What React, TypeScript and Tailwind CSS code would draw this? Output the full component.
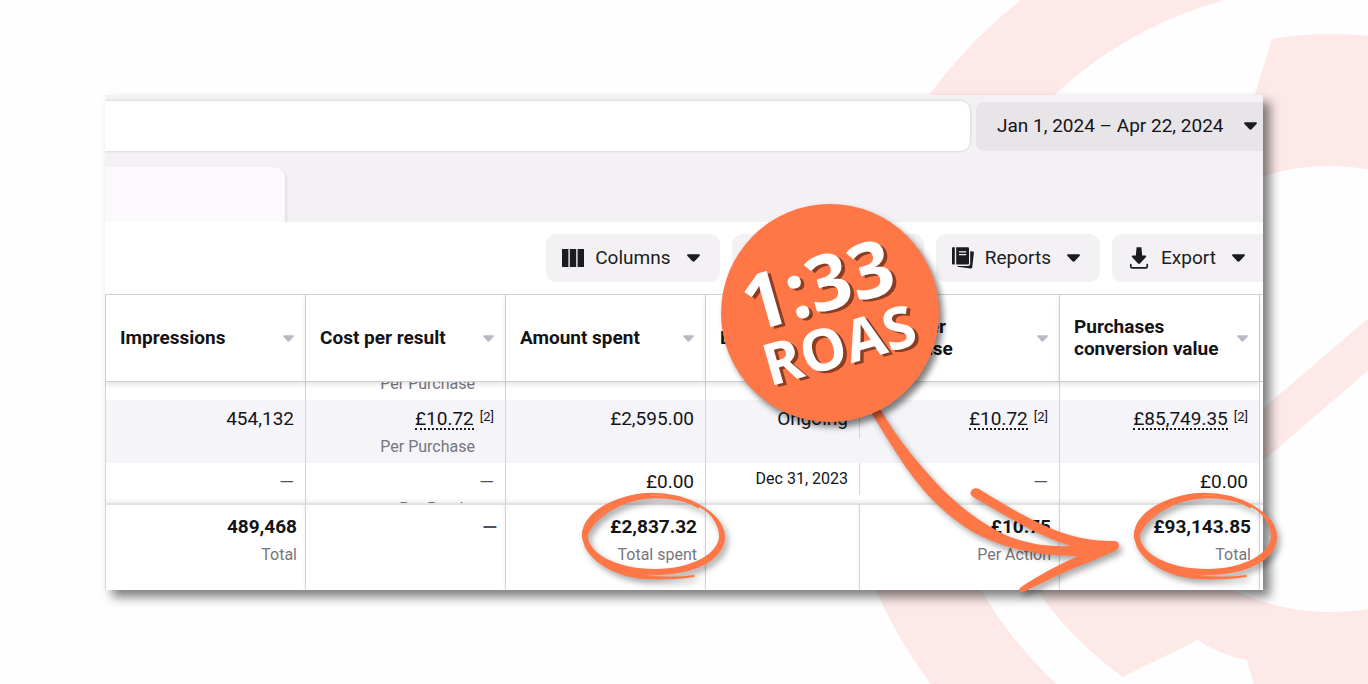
import React from 'react';

const CIRCLED = ['translate(-552 0)', 'translate(0 0)'];

const Caret: React.FC = () => (
  <svg className="w-[13px] h-2 shrink-0" viewBox="0 0 13 8" aria-hidden="true">
    <path d="M1.2 0.3H11.8C12.8 0.3 13.2 1.4 12.5 2.1L7.6 7.2C7 7.8 6 7.8 5.4 7.2L0.5 2.1C-0.2 1.4 0.2 0.3 1.2 0.3Z" fill="#1c1b20" />
  </svg>
);

const SortCaret: React.FC = () => (
  <svg className="w-[11px] h-[7px] shrink-0" viewBox="0 0 11 7" aria-hidden="true">
    <path d="M1 0.3H10C10.8 0.3 11.2 1.2 10.6 1.8L6.5 6.2C5.9 6.8 5.1 6.8 4.5 6.2L0.4 1.8C-0.2 1.2 0.2 0.3 1 0.3Z" fill="#bab9c4" />
  </svg>
);

const ColumnsIcon: React.FC = () => (
  <svg className="w-[22px] h-[22px]" viewBox="0 0 22 22" fill="#1c1b20" aria-hidden="true">
    <path d="M0 2H6.4V20H0ZM7.8 2H14.2V20H7.8ZM15.6 2H22V20H15.6Z" />
  </svg>
);

const ReportsIcon: React.FC = () => (
  <svg className="w-[22px] h-[22px]" viewBox="0 0 22 22" fill="#1c1b20" aria-hidden="true">
    <path d="M1 0.3H2.8V17.6H1.2C0.5 17.6 0 17 0 16.4V1.4C0 0.8 0.4 0.3 1 0.3Z" />
    <path d="M4.2 0.3H15.6C16.5 0.3 17 0.8 17 1.7V16.2C17 17.1 16.5 17.6 15.6 17.6H4.2Z" />
    <path d="M18.2 4.2L21 4.6C21.6 4.7 22 5.2 21.9 5.8L20.2 20.6C20.1 21.3 19.6 21.7 18.9 21.6L5.5 19.7L5.3 18.9H16C17.4 18.9 18.2 18 18.2 16.8Z" />
    <path d="M7 4.8H14.2M7 7.6H14.2" stroke="#f3f2f5" strokeWidth="1.2" />
  </svg>
);

const ExportIcon: React.FC = () => (
  <svg className="w-[22px] h-[22px]" viewBox="0 0 22 22" fill="#1c1b20" aria-hidden="true">
    <path d="M8.6 0.3H13.4L14.2 8.5H17.4C18.2 8.5 18.5 9.3 18 9.9L12 16.4C11.4 17 10.6 17 10 16.4L4 9.9C3.5 9.3 3.8 8.5 4.6 8.5H7.8Z" />
    <path d="M2.8 17.6V19.4C2.8 20.3 3.3 20.8 4.2 20.8H17.8C18.7 20.8 19.2 20.3 19.2 19.4V17.6" fill="none" stroke="#1c1b20" strokeWidth="1.7" strokeLinecap="round" />
  </svg>
);

const BreakdownIcon: React.FC = () => (
  <svg className="w-[22px] h-[22px]" viewBox="0 0 22 22" fill="#1c1b20" aria-hidden="true">
    <path d="M0 3H22V8H0ZM0 10H14V14H0ZM0 16H14V20H0Z" />
  </svg>
);

interface ToolButtonProps {
  label: string;
  icon: React.ReactNode;
  className?: string;
}

const ToolButton: React.FC<ToolButtonProps> = ({ label, icon, className = 'rounded-[10px] pr-5' }) => (
  <button type="button" className={`flex items-center h-12 pl-4 bg-[#f3f1f4] text-[19px] text-[#1c1b20] ${className}`}>
    <span className="mr-[11px]">{icon}</span>
    <span className="mr-4">{label}</span>
    <Caret />
  </button>
);

const HEADERS = [
  { name: 'Impressions' },
  { name: 'Cost per result' },
  { name: 'Amount spent' },
  { name: 'Ends', noSort: true },
  { name: 'Cost per purchase', narrow: true },
  { name: 'Purchases conversion value', narrow: true },
];

const Estimated: React.FC<{ value: string }> = ({ value }) => (
  <div className="flex justify-end">
    <a href="#" className="border-b-2 border-dotted border-[#1c1b20] h-[23px]">{value}</a>
    <sup className="top-0 ml-[6px] text-[13px] leading-5">[2]</sup>
  </div>
);

const Dash: React.FC = () => <span className="text-[#50505f]">—</span>;

interface TotalProps {
  value: string;
  label: string;
}

const Total: React.FC<TotalProps> = ({ value, label }) => (
  <td className="border-l border-[#d4d3d8] pr-2">
    <div className="font-bold">{value}</div>
    <div className="mt-1 text-base leading-6 text-[#77767b]">{label}</div>
  </td>
);

const Backdrop: React.FC = () => (
  <svg className="absolute inset-0 w-full h-full" viewBox="0 0 1368 684" preserveAspectRatio="xMaxYMid slice" aria-hidden="true">
    <circle cx="1330" cy="388" r="449" fill="none" stroke="#fde9e7" strokeWidth="94" />
    <g fill="#fde9e7">
      <path d="M1272 39A354 354 0 0 1 1368 36V169A222 222 0 0 0 1240 185L1235 160Z" />
      <path d="M1200 462L1368 318V370L1200 515Z" />
      <path d="M1030 578A354 354 0 0 0 1123 676L1198 639C1214 649 1230 656 1247 659L1254 684H1368V608A222 222 0 0 1 1200 569Z" />
    </g>
  </svg>
);

const Annotations: React.FC = () => (
  <svg className="absolute inset-0 z-20 w-full h-full overflow-visible pointer-events-none drop-shadow-[3px_4px_3px_rgba(0,0,0,0.35)]" viewBox="105 95 1158 495" aria-hidden="true">
    <path
      fill="#ff7747"
      d="M869 409C885 435 897 455 910 473C930 500 950 518 973 532C1000 547 1035 556 1078 556C1058 565 1035 577 1020 588C1018 590 1020 593 1023 592C1045 582 1065 571 1087 563L1115 551C1121 548 1120 540 1113 541C1092 541 1078 538 1060 532C1033 522 1005 505 979 489C973 486 967 493 973 497C1000 512 1035 535 1071 546C1048 547 1030 544 1010 537C985 526 965 511 943 490C920 466 897 438 880 409Z"
    />
    {CIRCLED.map((transform) => (
      <g key={transform} transform={transform} fill="none" stroke="#ff7747" strokeLinecap="round" strokeLinejoin="round">
        <path
          strokeWidth="2.4"
          d="M1250 507C1240 500 1222 497 1207 497C1185 497 1162 507 1149 520C1136 533 1134 543 1146 555C1160 567 1182 571 1207 572C1245 571 1275 556 1275 536C1275 523 1264 513 1252 506C1238 498 1220 494 1203 494C1170 495 1137 513 1135 535C1136 552 1157 569 1180 575"
        />
        <path
          fill="#ff7747"
          stroke="none"
          fillRule="evenodd"
          d="M1203 493C1164 495 1134 513 1134 536C1136 553 1160 575 1207 575C1250 575 1277 558 1277 537C1277 524 1266 513 1251 505C1264 515 1271 525 1271 536C1271 553 1244 569 1207 569C1168 569 1140 553 1140 536C1141 518 1168 499 1203 498Z"
        />
        <path
          fill="#ff7747"
          stroke="none"
          d="M1136 545C1144 564 1170 577 1197 579C1216 580 1234 579 1246 577C1248 576 1247 575 1245 575C1224 578 1198 577 1178 570C1162 565 1148 557 1140 545Z"
        />
      </g>
    ))}
  </svg>
);

const App: React.FC = () => {
  return (
    <main className="relative min-h-screen overflow-hidden bg-[#fefefe] px-[105px] py-[95px] font-[Roboto,sans-serif] text-[#141318]">
      <Backdrop />

      <div className="relative shadow-[7px_7px_10px_rgba(0,0,0,0.5)]">
        <section className="overflow-hidden bg-white">
          {/* Search and date range */}
          <div className="bg-[#f3f1f4] pt-[6px]">
            <div className="flex items-center gap-[6px]">
              <input
                type="text"
                aria-label="Search"
                className="min-w-0 flex-1 h-[50px] rounded-r-[10px] bg-white shadow-[0_0_3px_rgba(0,0,0,0.2)] outline-none"
              />
              <button type="button" className="flex items-center shrink-0 w-[287px] h-[49px] pl-[21px] rounded-l-lg bg-[#e8e5e8] text-[19px]">
                <span className="mr-5 whitespace-nowrap">Jan 1, 2024 – Apr 22, 2024</span>
                <Caret />
              </button>
            </div>
            <div className="mt-4 w-[180px] h-[55px] rounded-tr-xl bg-[#fbf9fc] shadow-[2px_2px_3px_rgba(0,0,0,0.08)]"></div>
          </div>

          {/* Toolbar */}
          <div className="relative flex justify-end gap-3 bg-white py-3">
            <ToolButton label="Columns" icon={<ColumnsIcon />} />
            <ToolButton label="Breakdown" icon={<BreakdownIcon />} />
            <ToolButton label="Reports" icon={<ReportsIcon />} />
            <ToolButton label="Export" icon={<ExportIcon />} className="w-[151px] rounded-l-[10px]" />
          </div>

          <table className="w-full table-fixed border-separate border-spacing-0 text-right text-[19px] leading-6">
            <colgroup>
              <col className="w-[200px]" />
              <col className="w-[200px]" />
              <col className="w-[200px]" />
              <col className="w-[154px]" />
              <col className="w-[200px]" />
              <col className="w-[200px]" />
              <col className="w-1" />
            </colgroup>
            <thead>
              <tr className="h-[88px]">
                {HEADERS.map((h) => (
                  <th key={h.name} className="relative z-10 border-l border-y border-[#cfced3] bg-white p-0 pl-[14px] pr-[11px] text-left shadow-[0_3px_5px_rgba(0,0,0,0.1)]">
                    <div className="flex items-center justify-between text-[19px] leading-[22px]">
                      <span className={h.narrow ? 'w-[150px]' : ''}>{h.name}</span>
                      {!h.noSort && <SortCaret />}
                    </div>
                  </th>
                ))}
                <th className="border-l border-y border-[#cfced3] p-0"></th>
              </tr>
            </thead>
            <tbody className="align-top">
              <tr className="h-[18px]">
                <td className="border-l border-[#d4d3d8] p-0"></td>
                <td className="border-l border-[#d4d3d8] p-0 pr-[30px]">
                  <div className="flex items-end justify-end h-[18px] overflow-hidden text-base leading-6 text-[#77767b]">
                    <span className="pb-1">Per Purchase</span>
                  </div>
                </td>
                <td className="border-l border-[#d4d3d8] p-0"></td>
                <td className="border-l border-[#d4d3d8] p-0"></td>
                <td className="border-l border-[#e4e3e8] p-0"></td>
                <td className="border-l border-[#d4d3d8] p-0"></td>
                <td className="border-l border-[#d4d3d8] p-0"></td>
              </tr>
              <tr className="h-[63px] bg-[#f5f4f9]">
                <td className="border-l border-[#d4d3d8] p-0 pt-[7px] pr-[11px]">454,132</td>
                <td className="border-l border-[#d4d3d8] p-0 pt-[7px] pr-[11px]">
                  <Estimated value="£10.72" />
                  <div className="mt-[5px] pr-[19px] text-base leading-6 text-[#77767b]">Per Purchase</div>
                </td>
                <td className="border-l border-[#d4d3d8] p-0 pt-[7px] pr-[11px]">£2,595.00</td>
                <td className="border-l border-[#d4d3d8] p-0">
                  <div className="h-[38px] -mr-px border-r border-[#d4d3d8] pt-[7px] pr-[11px]">Ongoing</div>
                </td>
                <td className="p-0 pt-[7px] pr-[11px]">
                  <Estimated value="£10.72" />
                </td>
                <td className="border-l border-[#d4d3d8] p-0 pt-[7px] pr-[11px]">
                  <Estimated value="£85,749.35" />
                </td>
                <td className="border-l border-[#d4d3d8] bg-white p-0"></td>
              </tr>
              <tr className="h-10">
                <td className="border-l border-[#d4d3d8] p-0 pt-[7px] pr-[11px]"><Dash /></td>
                <td className="border-l border-[#d4d3d8] p-0 pr-[11px]">
                  <div className="h-10 overflow-hidden pt-[7px]">
                    <Dash />
                    <div className="mt-[3px] text-base leading-6 text-[#77767b]">Per Purchase</div>
                  </div>
                </td>
                <td className="border-l border-[#d4d3d8] p-0 pt-[7px] pr-[11px]">£0.00</td>
                <td className="border-l border-[#d4d3d8] p-0">
                  <div className="h-8 -mr-px border-r border-[#d4d3d8] pt-1 pr-[11px] text-base leading-6">Dec 31, 2023</div>
                </td>
                <td className="p-0 pt-[7px] pr-[11px]"><Dash /></td>
                <td className="border-l border-[#d4d3d8] p-0 pt-[7px] pr-[11px]">£0.00</td>
                <td className="border-l border-[#d4d3d8] p-0"></td>
              </tr>
            </tbody>
            <tfoot className="align-top [&_td]:relative [&_td]:h-[87px] [&_td]:border-t-2 [&_td]:border-t-[#e2e1e5] [&_td]:bg-white [&_td]:pt-[10px] [&_td]:shadow-[0_-2px_4px_rgba(0,0,0,0.08)]">
              <tr>
                <Total value="489,468" label="Total" />
                <td className="border-l border-[#d4d3d8] pr-2 font-bold"><Dash /></td>
                <Total value="£2,837.32" label="Total spent" />
                <td className="border-l border-[#d4d3d8]"></td>
                <Total value="£10.75" label="Per Action" />
                <Total value="£93,143.85" label="Total" />
                <td className="border-l border-[#d4d3d8]"></td>
              </tr>
            </tfoot>
          </table>
        </section>

        <Annotations />

        {/* Round sticker */}
        <div className="absolute left-[616px] top-[109px] z-30 flex items-center justify-center size-[218px] rounded-full bg-[#ff7747] shadow-[4px_5px_6px_rgba(0,0,0,0.5)]">
          <p className="-rotate-16 text-center font-[Open_Sans,sans-serif] font-bold text-white [text-shadow:3px_3px_0_#8a3d23]">
            <span className="block pr-2 text-[77px] leading-16">1:33</span>
            <span className="block text-[58px] leading-16">ROAS</span>
          </p>
        </div>
      </div>
    </main>
  );
};

export default App;
